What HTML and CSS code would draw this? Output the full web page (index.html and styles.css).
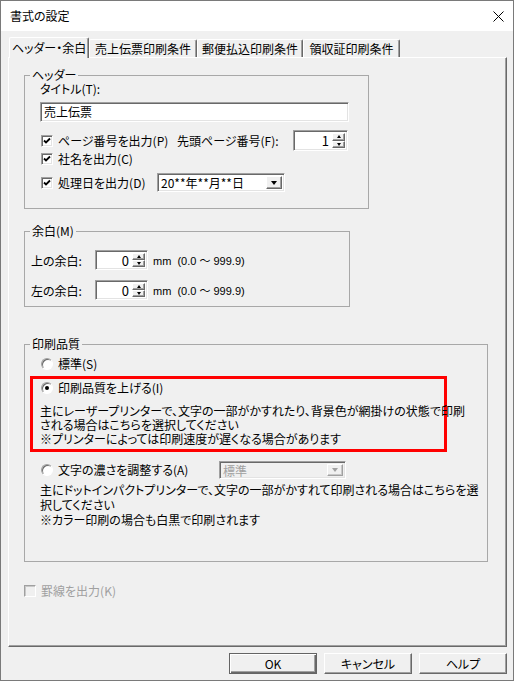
FILE: index.html
```html
<!DOCTYPE html>
<html>
<head>
<title>書式の設定</title>
<link rel="stylesheet" href="styles.css">
</head>
<body>
<div class="window">
  <div class="titlebar">
    <span class="title">書式の設定</span>
    <svg class="close" width="11" height="11" viewBox="0 0 11 11"><path d="M0.5 0.5L10.5 10.5M10.5 0.5L0.5 10.5" stroke="#000" stroke-width="1" fill="none"/></svg>
  </div>

  <div class="tabs">
    <div class="tab active t1">ヘッダー・余白</div>
    <div class="tab t2">売上伝票印刷条件</div>
    <div class="tab t3">郵便払込印刷条件</div>
    <div class="tab t4">領収証印刷条件</div>
  </div>

  <div class="panel">
    <fieldset class="group g-header">
      <legend>ヘッダー</legend>
      <div class="gbody">
        <div class="line">タイトル(T):</div>
        <div class="textbox sunken">売上伝票</div>
        <div class="row r1">
          <span class="opt w137"><span class="check sunken"><svg width="8" height="8" viewBox="0 0 8 8"><path d="M1 3.5l2 2 4-4" stroke="#000" stroke-width="1.8" fill="none"/></svg></span><span class="opt-text">ページ番号を出力(P)</span></span>
          <span class="w116">先頭ページ番号(F):</span>
          <span class="spin sunken w55"><span class="val">1</span><span class="spin-btns"><span class="sb up"></span><span class="sb down"></span></span></span>
        </div>
        <div class="row r2">
          <span class="opt"><span class="check sunken"><svg width="8" height="8" viewBox="0 0 8 8"><path d="M1 3.5l2 2 4-4" stroke="#000" stroke-width="1.8" fill="none"/></svg></span><span class="opt-text">社名を出力(C)</span></span>
        </div>
        <div class="row r3">
          <span class="opt w117"><span class="check sunken"><svg width="8" height="8" viewBox="0 0 8 8"><path d="M1 3.5l2 2 4-4" stroke="#000" stroke-width="1.8" fill="none"/></svg></span><span class="opt-text">処理日を出力(D)</span></span>
          <span class="combo sunken c-date"><span class="combo-text">20**年**月**日</span><span class="combo-btn"></span></span>
        </div>
      </div>
    </fieldset>

    <fieldset class="group g-margin">
      <legend>余白(M)</legend>
      <div class="gbody">
        <div class="row m1">
          <span class="w64">上の余白:</span>
          <span class="spin sunken w53"><span class="val">0</span><span class="spin-btns"><span class="sb up"></span><span class="sb down"></span></span></span>
          <span class="unit">mm&nbsp;&nbsp;(0.0 ～ 999.9)</span>
        </div>
        <div class="row m2">
          <span class="w64">左の余白:</span>
          <span class="spin sunken w53"><span class="val">0</span><span class="spin-btns"><span class="sb up"></span><span class="sb down"></span></span></span>
          <span class="unit">mm&nbsp;&nbsp;(0.0 ～ 999.9)</span>
        </div>
      </div>
    </fieldset>

    <fieldset class="group g-quality">
      <legend>印刷品質</legend>
      <div class="gbody">
        <div class="row q1">
          <span class="opt"><span class="radio"></span><span class="opt-text">標準(S)</span></span>
        </div>
        <div class="highlight">
          <div class="row q2">
            <span class="opt"><span class="radio on"></span><span class="opt-text">印刷品質を上げる(I)</span></span>
          </div>
          <div class="desc">主にレーザープリンターで、文字の一部がかすれたり、背景色が網掛けの状態で印刷<br>される場合はこちらを選択してください<br>※プリンターによっては印刷速度が遅くなる場合があります</div>
        </div>
        <div class="row q3">
          <span class="opt w179"><span class="radio"></span><span class="opt-text">文字の濃さを調整する(A)</span></span>
          <span class="combo disabled c-level"><span class="combo-text">標準</span><span class="combo-btn"></span></span>
        </div>
        <div class="desc desc2">主にドットインパクトプリンターで、文字の一部がかすれて印刷される場合はこちらを選<br>択してください<br>※カラー印刷の場合も白黒で印刷されます</div>
      </div>
    </fieldset>

    <div class="row rule">
      <span class="opt"><span class="check off"></span><span class="opt-text">罫線を出力(K)</span></span>
    </div>
  </div>

  <div class="buttons">
    <div class="btn default">OK</div>
    <div class="btn">キャンセル</div>
    <div class="btn">ヘルプ</div>
  </div>
</div>
</body>
</html>
```

FILE: styles.css
```css
* {
  box-sizing: border-box;
}

body {
  margin: 0;
  font-family: "Noto Sans CJK JP", "Liberation Sans", sans-serif;
  font-size: 12px;
  color: #000;
  font-feature-settings: "palt";
}

.window {
  width: 514px;
  height: 681px;
  border: 1px solid #7a7a7a;
  background: #f0f0f0;
  display: flex;
  flex-direction: column;
}

/* title bar */
.titlebar {
  height: 30px;
  background: #fff;
  display: flex;
  align-items: center;
  justify-content: space-between;
  padding: 0 9px 0 9px;
  flex-shrink: 0;
}

.title {
  line-height: 14px;
}

/* tabs */
.tabs {
  display: flex;
  align-items: flex-end;
  height: 21px;
  margin-top: 6px;
  padding-left: 8px;
  margin-bottom: -1px;
  position: relative;
  z-index: 2;
}

.tab {
  height: 18px;
  margin-bottom: 1px;
  line-height: 17px;
  text-align: center;
  border-top: 1px solid #fff;
  border-left: 1px solid #fff;
  border-right: 1px solid #696969;
  box-shadow: inset -1px 0 #a0a0a0;
  border-radius: 2px 2px 0 0;
  background: #f0f0f0;
}

.tab.active {
  height: 21px;
  margin-bottom: 0;
  line-height: 19px;
}

.t1 { width: 80px; }
.t2 { width: 108px; }
.t3 { width: 106px; }
.t4 { width: 97px; }

/* tab page */
.panel {
  margin-left: 7px;
  width: 499px;
  height: 590px;
  flex-shrink: 0;
  border-top: 1px solid #fff;
  border-left: 1px solid #fff;
  border-right: 1px solid #696969;
  border-bottom: 1px solid #696969;
  box-shadow: inset -1px -1px #a0a0a0;
  padding: 0 15px;
  position: relative;
  z-index: 1;
}

.group {
  margin: 0;
  padding: 0;
  border: 1px solid #a8a8a8;
  min-width: 0;
}

.group legend {
  margin-left: 5px;
  padding: 0 2px;
  line-height: 14px;
}

.g-header {
  margin-top: 10px;
  width: 345px;
  height: 141px;
}

.g-margin {
  margin-top: 15px;
  width: 326px;
  height: 83px;
}

.g-quality {
  margin-top: 30px;
  width: 464px;
  height: 225px;
}

.gbody {
  padding-left: 15px;
}

.g-margin .gbody {
  padding-left: 6px;
}

.line {
  line-height: 14px;
}

.row {
  display: flex;
  align-items: center;
}

.opt {
  display: flex;
  align-items: center;
}

.opt-text {
  margin-left: 5px;
  line-height: 14px;
}

.w137 { width: 137px; }
.w116 { width: 116px; }
.w117 { width: 117px; }
.w64 { width: 64px; }
.w179 { width: 179px; }
.w55 { width: 55px; }
.w53 { width: 53px; }

/* sunken 3d edge */
.sunken {
  border: 1px solid;
  border-color: #a0a0a0 #fff #fff #a0a0a0;
  box-shadow: inset 1px 1px #696969, inset -1px -1px #e3e3e3;
  background: #fff;
}

.textbox {
  margin-top: 6px;
  width: 309px;
  height: 20px;
  padding: 0 3px;
  line-height: 18px;
  font-size: 12px;
}

.r1 {
  margin-top: 8px;
  height: 21px;
}

.r2 {
  height: 16px;
}

.r3 {
  margin-top: 6px;
  height: 19px;
}

.check {
  width: 12px;
  height: 12px;
  margin-left: 1px;
  display: flex;
  align-items: center;
  justify-content: center;
  flex-shrink: 0;
}

.check.off {
  margin-left: 0;
  border: 1px solid;
  border-color: #a0a0a0 #fff #fff #a0a0a0;
  box-shadow: inset 1px 1px #c8c8c8;
  background: #f0f0f0;
}

/* spin box */
.spin {
  height: 21px;
  display: flex;
  align-items: stretch;
  padding: 2px;
}

.spin .val {
  flex: 1;
  text-align: right;
  line-height: 16px;
  padding-right: 3px;
  font-size: 13px;
}

.spin-btns {
  width: 13px;
  display: flex;
  flex-direction: column;
}

.sb {
  flex: 1;
  background: #f0f0f0;
  border: 1px solid;
  border-color: #fff #696969 #696969 #fff;
  box-shadow: inset -1px -1px #a0a0a0;
  display: flex;
  align-items: center;
  justify-content: center;
}

.sb::after {
  content: "";
  border-left: 2.5px solid transparent;
  border-right: 2.5px solid transparent;
}

.sb.up::after {
  border-bottom: 3px solid #000;
}

.sb.down::after {
  border-top: 3px solid #000;
}

/* combo box */
.combo {
  display: flex;
  align-items: stretch;
  padding: 2px;
}

.combo-text {
  flex: 1;
  line-height: 14px;
  padding-left: 1px;
}

.combo-btn {
  width: 16px;
  background: #f0f0f0;
  border: 1px solid;
  border-color: #fff #696969 #696969 #fff;
  box-shadow: inset -1px -1px #a0a0a0;
  display: flex;
  align-items: center;
  justify-content: center;
}

.combo-btn::after {
  content: "";
  border-left: 3.5px solid transparent;
  border-right: 3.5px solid transparent;
  border-top: 4px solid #000;
}

.c-date {
  width: 128px;
  height: 19px;
}

.c-level {
  width: 127px;
  height: 18px;
}

.combo.disabled {
  border: 1px solid;
  border-color: #a0a0a0 #fff #fff #a0a0a0;
  box-shadow: inset 1px 1px #696969, inset -1px -1px #e3e3e3;
  background: #f0f0f0;
  color: #a0a0a0;
}

.combo.disabled .combo-btn {
  box-shadow: inset -1px -1px #c8c8c8;
  border-color: #fff #a0a0a0 #a0a0a0 #fff;
}

.combo.disabled .combo-btn::after {
  border-top-color: #a0a0a0;
}

/* margin group */
.m1 {
  margin-top: 12px;
  height: 20px;
}

.m2 {
  margin-top: 10px;
  height: 20px;
}

.m1 .spin,
.m2 .spin {
  height: 20px;
}

.unit {
  margin-left: 5px;
  font-size: 11px;
  font-family: "Liberation Sans", "Noto Sans CJK JP", sans-serif;
}

/* quality group */
.radio {
  width: 12px;
  height: 12px;
  margin-left: 1px;
  border-radius: 50%;
  border: 1px solid;
  border-color: #a0a0a0 #fff #fff #a0a0a0;
  box-shadow: inset 1px 1px #696969;
  background: #fff;
  display: flex;
  align-items: center;
  justify-content: center;
  flex-shrink: 0;
}

.radio.on::after {
  content: "";
  width: 4px;
  height: 4px;
  border-radius: 50%;
  background: #000;
}

.q1 {
  margin-top: 6px;
  height: 14px;
}

.highlight {
  margin-top: 5px;
  margin-left: -10px;
  width: 417px;
  border: 3px solid #f00;
  padding: 2px 0 3px 7px;
}

.q2 {
  height: 14px;
}

.desc {
  margin-top: 9px;
  line-height: 14px;
  white-space: nowrap;
}

.q3 {
  margin-top: 9px;
  height: 18px;
}

.desc2 {
  margin-top: 3px;
  line-height: 15px;
}

.rule {
  margin-top: 22px;
  height: 14px;
  color: #a0a0a0;
}

/* buttons */
.buttons {
  margin-top: 6px;
  margin-left: 7px;
  width: 499px;
  display: flex;
  justify-content: flex-end;
  gap: 7px;
}

.btn {
  width: 88px;
  height: 21px;
  line-height: 19px;
  text-align: center;
  background: #f0f0f0;
  border: 1px solid;
  border-color: #fff #696969 #696969 #fff;
  box-shadow: inset -1px -1px #a0a0a0;
}

.btn.default {
  border-color: #646464;
  box-shadow: inset 1px 1px #fff, inset -1px -1px #696969, inset -2px -2px #a0a0a0;
}
```
